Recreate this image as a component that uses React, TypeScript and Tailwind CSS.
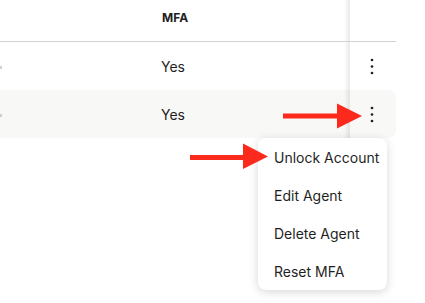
import React from "react"

const rows = [{ mfa: "Yes" }, { mfa: "Yes" }]

const menuItems = ["Unlock Account", "Edit Agent", "Delete Agent", "Reset MFA"]

function KebabIcon() {
  return (
    <svg width="4" height="17" viewBox="0 0 4 17" className="ml-[20px]">
      <circle cx="2" cy="2" r="1.35" fill="#222" />
      <circle cx="2" cy="8.5" r="1.35" fill="#222" />
      <circle cx="2" cy="15" r="1.35" fill="#222" />
    </svg>
  )
}

function StickyShadow() {
  return <div className="absolute top-0 bottom-0 -left-[6px] w-[6px] bg-gradient-to-l from-black/[0.09] to-transparent" />
}

export default function App() {
  return (
    <div className="relative w-[425px] h-[303px] overflow-hidden bg-white font-['Inter',sans-serif] text-[#1f1f1f]">
      <div className="w-[396px]">
        {/* header */}
        <div className="flex h-[42px] border-b border-[#d2d2d0]">
          <div className="w-[161px]" />
          <div className="flex-1 pt-[10px] text-[12px] font-bold leading-4 pl-[1px]">MFA</div>
          <div className="relative w-[46px] bg-white">
            <StickyShadow />
          </div>
        </div>

        {rows.map((row, i) => (
          <div
            key={i}
            className={
              i === 1
                ? "flex h-[48px] items-center bg-[#f8f8f6] rounded-r-lg"
                : "flex h-[48px] items-center"
            }
          >
            <div className="w-[161px] flex items-center">
              <div className="w-[2px] h-[3px] bg-[#cfcfcf] mt-[2px]" />
            </div>
            <div className="flex-1 text-[14px]">{row.mfa}</div>
            <div className="relative w-[46px] h-full flex items-center">
              <StickyShadow />
              <KebabIcon />
            </div>
          </div>
        ))}
      </div>

      {/* dropdown menu */}
      <div className="absolute left-[258px] top-[138px] w-[129px] rounded-lg bg-white shadow-[0_2px_10px_rgba(0,0,0,0.16)]">
        {menuItems.map(item => (
          <div key={item} className="h-[38px] flex items-center pl-4 text-[14px] text-[#1f1f1f]">
            {item}
          </div>
        ))}
      </div>

      {/* annotation arrows */}
      <svg className="absolute inset-0 pointer-events-none" width="425" height="303" viewBox="0 0 425 303">
        <rect x="283" y="113.5" width="56" height="5" fill="#fb2a1c" />
        <polygon points="337,103.5 362,116 337,128.5" fill="#fb2a1c" />
        <rect x="190" y="155" width="56" height="5" fill="#fb2a1c" />
        <polygon points="243,143.5 268,156.5 243,169" fill="#fb2a1c" />
      </svg>
    </div>
  )
}
